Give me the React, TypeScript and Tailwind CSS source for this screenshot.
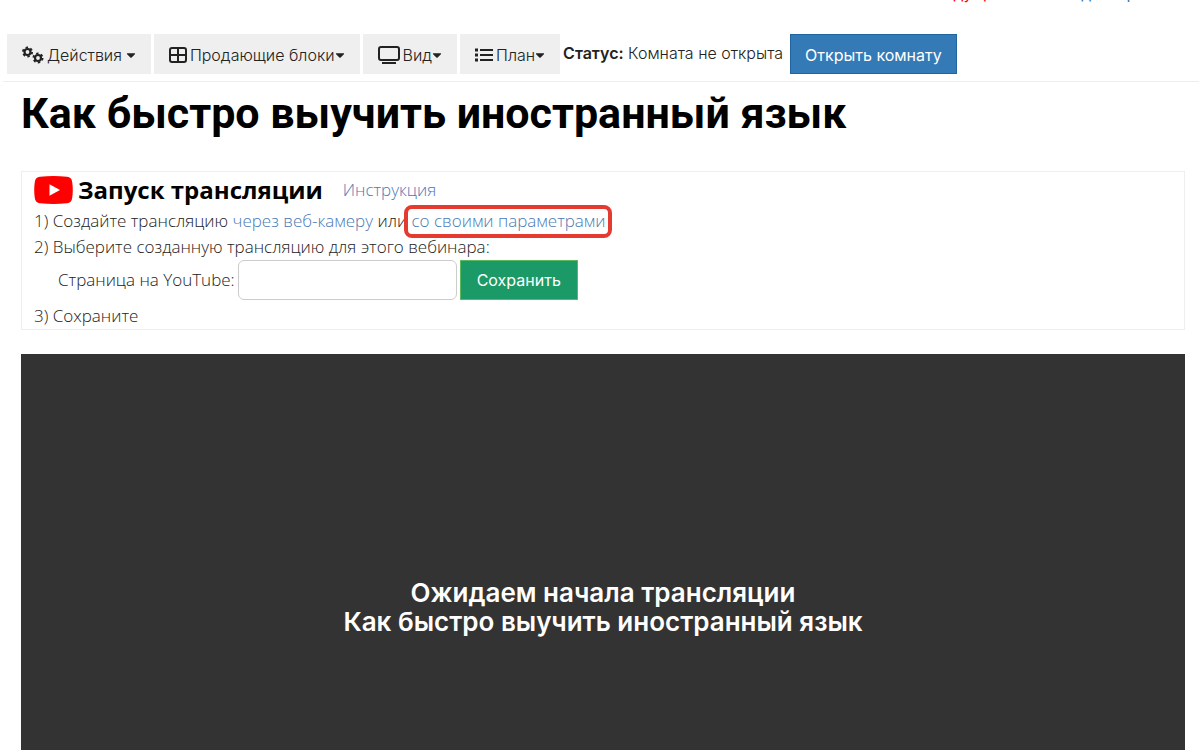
import { useState } from "react";
import type { ReactNode } from "react";
import { FaCaretDown } from "react-icons/fa";

const TITLE = "Как быстро выучить иностранный язык";

const CogsIcon = () => (
  <svg width="22" height="18" viewBox="0 0 22 18" fill="none" stroke="#222">
    <circle cx="5.500" cy="6" r="3" strokeWidth="2.200" />
    <circle cx="5.500" cy="6" r="4.600" strokeWidth="1.800" strokeDasharray="2.400 2.417" />
    <circle cx="16" cy="12" r="3" strokeWidth="2.200" />
    <circle cx="16" cy="12" r="4.600" strokeWidth="1.800" strokeDasharray="2.400 2.417" />
  </svg>
);

const GridIcon = () => (
  <svg width="18" height="16" viewBox="0 0 18 16" fill="none" stroke="#222" strokeWidth="2">
    <rect x="1" y="1" width="16" height="14" rx="2" />
    <path d="M9 1v14M1 8h16" />
  </svg>
);

const ScreenIcon = () => (
  <svg width="22" height="18" viewBox="0 0 22 18" fill="none" stroke="#222" strokeWidth="2">
    <rect x="1" y="1" width="20" height="13" rx="2" />
    <path d="M4 17h14" />
  </svg>
);

const ListIcon = () => (
  <svg width="18" height="14" viewBox="0 0 18 14" fill="none" stroke="#222" strokeWidth="2">
    <path d="M5 2h13M5 7h13M5 12h13" />
    <path d="M0 2h3M0 7h3M0 12h3" strokeWidth="3" />
  </svg>
);

const YoutubeLogo = () => (
  <svg width="39" height="28" viewBox="0 0 39 28">
    <path
      d="M6 .8Q19.500-.6 33 .8Q37.600 1 38.200 6Q39.400 14 38.200 22Q37.600 27 33 27.200Q19.500 28.600 6 27.200Q1.400 27 .8 22Q-.4 14 .8 6Q1.400 1 6 .8Z"
      fill="#f00"
    />
    <path d="M15.500 8.200v11.600L26 14z" fill="#fff" />
  </svg>
);

function MenuButton({ icon, label, spaced }: { icon: ReactNode; label: string; spaced?: boolean }) {
  return (
    <button className="flex h-10 items-center bg-[#efefef] px-[15px] pt-0.5 text-[16px] font-light text-[#222]">
      {icon}
      <span className={spaced ? "mr-1 ml-[3px]" : "ml-[3px]"}>{label}</span>
      <FaCaretDown size={14} className="-mx-0.5" />
    </button>
  );
}

export default function App() {
  const [url, setUrl] = useState("");

  return (
    <div className="flex h-screen flex-col overflow-hidden bg-white font-['Inter',sans-serif] text-[#222]">
      {/* account links */}
      <div className="flex h-[34px] shrink-0 items-start justify-end gap-12 pr-[18px] text-[16px] leading-none">
        <a href="#host" className="-mt-[15px] text-[#f00]">Ведущий</a>
        <a href="#training" className="-mt-[15px] text-[#337ab7]">Вход на тренинг</a>
      </div>

      {/* toolbar */}
      <div className="ml-[3px] flex h-12 shrink-0 items-start gap-[3px] border-b border-[#eee] pl-1">
        <MenuButton icon={<CogsIcon />} label="Действия" spaced />
        <MenuButton icon={<GridIcon />} label="Продающие блоки" />
        <MenuButton icon={<ScreenIcon />} label="Вид" />
        <MenuButton icon={<ListIcon />} label="План" />
        <p className="mr-1 text-[16px] leading-[38px] font-light whitespace-nowrap">
          <b className="font-semibold">Статус:</b> Комната не открыта
        </p>
        <button className="h-10 border border-[#2064a0] bg-[#337ab7] px-3.5 pt-0.5 text-[16px] whitespace-nowrap text-white">
          Открыть комнату
        </button>
      </div>

      <main className="flex grow flex-col pr-3.5 pl-[21px]">
        <h1 className="mt-1.5 font-['Roboto',sans-serif] text-[43px] leading-[50px] font-bold text-black">{TITLE}</h1>

        {/* broadcast setup */}
        <section className="mt-[33px] border border-[#eee] px-3 font-['Open_Sans',sans-serif] text-[17px] leading-[26px] font-light text-[#222]">
          <div className="flex h-9 items-center">
            <YoutubeLogo />
            <h2 className="ml-[5px] text-[24px] font-bold text-black">Запуск трансляции</h2>
            <a href="#help" className="ml-5 text-[#4a7ab5]">Инструкция</a>
          </div>
          <p>
            1) Создайте трансляцию <a href="#webcam" className="text-[#4a7ab5]">через веб-камеру</a> или{" "}
            <span className="relative">
              <a href="#custom" className="text-[#4a7ab5]">со своими параметрами</a>
              <span className="pointer-events-none absolute -top-1 -right-1.5 -bottom-1.5 -left-2 rounded-lg border-4 border-[#e53a30]" />
            </span>
          </p>
          <p>2) Выберите созданную трансляцию для этого вебинара:</p>
          <form className="flex items-center gap-[3px] pl-6" onSubmit={(e) => e.preventDefault()}>
            <label htmlFor="youtube">Страница на YouTube:</label>
            <input
              id="youtube"
              value={url}
              onChange={(e) => setUrl(e.target.value)}
              className="h-10 w-[219px] rounded-md border border-[#ccc] px-3 outline-none"
            />
            <button className="h-10 border border-[#5cb85c] bg-[#1b9a68] px-4 font-['Inter',sans-serif] text-[16px] font-normal text-white">
              Сохранить
            </button>
          </form>
          <p className="pt-[3px]">3) Сохраните</p>
        </section>

        {/* player */}
        <section className="mt-6 grow bg-[#333] pt-56 text-center text-[26px] leading-[29px] font-semibold text-white">
          <p>Ожидаем начала трансляции</p>
          <p>{TITLE}</p>
        </section>
      </main>
    </div>
  );
}
